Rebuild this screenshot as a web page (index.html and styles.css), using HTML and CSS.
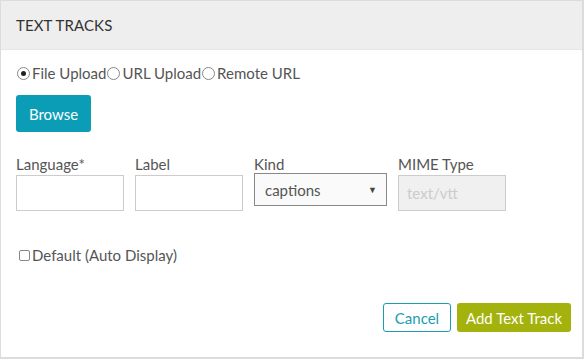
FILE: index.html
```html
<!DOCTYPE html>
<html>
<head>
<meta charset="utf-8">
<link rel="stylesheet" href="styles.css">
</head>
<body>
<div class="panel">
  <div class="header">TEXT TRACKS</div>
  <div class="body">
    <div class="radios">
      <label class="opt"><input type="radio" name="src" checked>File Upload</label>
      <label class="opt"><input type="radio" name="src">URL Upload</label>
      <label class="opt"><input type="radio" name="src">Remote URL</label>
    </div>
    <button class="browse">Browse</button>
    <div class="fields">
      <div class="field">
        <label class="lbl">Language*</label>
        <input class="txt" type="text">
      </div>
      <div class="field">
        <label class="lbl">Label</label>
        <input class="txt" type="text">
      </div>
      <div class="field">
        <label class="lbl">Kind</label>
        <div class="select"><span>captions</span><span class="caret">&#9660;</span></div>
      </div>
      <div class="field">
        <label class="lbl">MIME Type</label>
        <input class="txt disabled" type="text" placeholder="text/vtt" disabled>
      </div>
    </div>
    <label class="check"><input type="checkbox">Default (Auto Display)</label>
    <div class="actions">
      <button class="cancel">Cancel</button>
      <button class="add">Add Text Track</button>
    </div>
  </div>
</div>
</body>
</html>
```
FILE: styles.css
```css
html, body {
  margin: 0;
  padding: 0;
  background: #fff;
}
.panel {
  width: 584px;
  height: 359px;
  box-sizing: border-box;
  border: 1px solid #dcdcdc;
  border-right-width: 2px;
  border-bottom-width: 2px;
  font-family: Lato, "Open Sans", sans-serif;
  color: #555;
  display: flex;
  flex-direction: column;
}
.header {
  height: 49px;
  background: #eeeeee;
  border-bottom: 1px solid #e6e6e6;
  box-sizing: border-box;
  padding-left: 15px;
  display: flex;
  align-items: center;
  font-size: 15px;
  color: #333;
  letter-spacing: 0.1px;
}
.body {
  flex: 1;
  padding: 0 11px 0 15px;
  display: flex;
  flex-direction: column;
}
.radios {
  margin-top: 15px;
  height: 16px;
  display: flex;
  align-items: center;
  font-size: 15px;
  color: #555;
}
.opt {
  display: flex;
  align-items: center;
}
.opt input {
  appearance: none;
  -webkit-appearance: none;
  margin: 0 2px 0 1px;
  width: 13px;
  height: 13px;
  border: 1px solid #888;
  border-radius: 50%;
  box-sizing: border-box;
  background: #fff;
  position: relative;
}
.opt input:checked::after {
  content: "";
  position: absolute;
  left: 3px;
  top: 3px;
  width: 5px;
  height: 5px;
  border-radius: 50%;
  background: #222;
}
.browse {
  margin-top: 14px;
  width: 75px;
  height: 37px;
  border: none;
  border-radius: 3px;
  background: #0b9db6;
  color: #fff;
  font-family: Lato, sans-serif;
  font-size: 15px;
  padding: 0;
}
.fields {
  margin-top: 23px;
  display: flex;
  gap: 11px;
  align-items: flex-start;
}
.field {
  display: flex;
  flex-direction: column;
}
.lbl {
  font-size: 15px;
  color: #555;
  line-height: 18px;
  height: 18px;
  margin-bottom: 2px;
}
.txt {
  width: 108px;
  height: 36px;
  box-sizing: border-box;
  border: 1px solid #ccc;
  margin: 0;
  padding: 0 8px;
  font-family: Lato, sans-serif;
  font-size: 15px;
  background: #fff;
}
.txt.disabled {
  background: #f0f0f0;
  border-color: #ccc;
}
.txt.disabled::placeholder {
  color: #ccc;
}
.select {
  margin-top: -2px;
  width: 133px;
  height: 33px;
  box-sizing: border-box;
  border: 1px solid #888;
  background: #fafafa;
  display: flex;
  align-items: center;
  justify-content: space-between;
  padding: 0 9px 0 10px;
  font-size: 15px;
  color: #555;
}
.caret {
  font-size: 9px;
  color: #444;
}
.check {
  margin-top: 35px;
  display: flex;
  align-items: center;
  font-size: 15px;
  color: #555;
}
.check input {
  appearance: none;
  -webkit-appearance: none;
  width: 11px;
  height: 11px;
  margin: 0 2px 0 3px;
  border: 1px solid #888;
  border-radius: 2px;
  box-sizing: border-box;
  background: #fff;
}
.actions {
  margin-top: 39px;
  display: flex;
  justify-content: flex-end;
  gap: 6px;
}
.cancel, .add {
  height: 29px;
  border-radius: 3px;
  font-family: Lato, sans-serif;
  font-size: 15px;
  padding: 0;
}
.cancel {
  width: 68px;
  background: #fff;
  border: 1px solid #1a9db3;
  color: #1a9db3;
}
.add {
  width: 114px;
  background: #a4b20d;
  border: none;
  color: #fff;
}
```
